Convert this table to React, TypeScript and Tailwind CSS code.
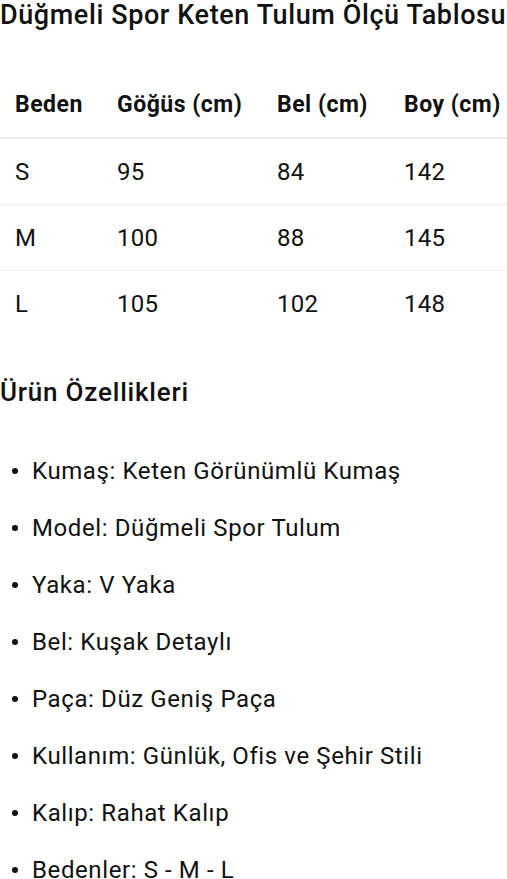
const headers = ["Beden", "Göğüs (cm)", "Bel (cm)", "Boy (cm)"];

const rows = [
  ["S", "95", "84", "142"],
  ["M", "100", "88", "145"],
  ["L", "105", "102", "148"],
];

const features = [
  "Kumaş: Keten Görünümlü Kumaş",
  "Model: Düğmeli Spor Tulum",
  "Yaka: V Yaka",
  "Bel: Kuşak Detaylı",
  "Paça: Düz Geniş Paça",
  "Kullanım: Günlük, Ofis ve Şehir Stili",
  "Kalıp: Rahat Kalıp",
  "Bedenler: S - M - L",
];

const App = () => {
  return (
    <div className="w-[507px] bg-white text-[#111] font-['Roboto',sans-serif]">
      <h1 className="h-[30px] leading-[30px] text-[27px] tracking-[0.6px] font-medium whitespace-nowrap">
        Düğmeli Spor Keten Tulum Ölçü Tablosu
      </h1>

      <div className="mt-[43px]">
        <div className="grid grid-cols-[102px_160px_127px_1fr] h-[66px] items-center border-b-2 border-[#ececec]">
          {headers.map((h) => (
            <div key={h} className="pl-[15px] text-[23px] tracking-[0.5px] font-bold whitespace-nowrap">
              {h}
            </div>
          ))}
        </div>
        {rows.map((row, i) => (
          <div
            key={row[0]}
            className={
              i < rows.length - 1
                ? "grid grid-cols-[102px_160px_127px_1fr] h-[66px] items-center border-b border-[#ececec]"
                : "grid grid-cols-[102px_160px_127px_1fr] h-[66px] items-center"
            }
          >
            {row.map((cell, j) => (
              <div key={j} className="pl-[15px] text-[24px] tracking-[0.3px] whitespace-nowrap">
                {cell}
              </div>
            ))}
          </div>
        ))}
      </div>

      <h2 className="mt-[40px] h-[30px] leading-[30px] text-[26px] tracking-[0.8px] font-medium">
        Ürün Özellikleri
      </h2>

      <ul className="mt-[50px] flex flex-col gap-[29px]">
        {features.map((f) => (
          <li key={f} className="flex items-center h-[28px] leading-[28px] text-[24px] tracking-[0.6px] whitespace-nowrap">
            <span className="w-[6px] h-[6px] rounded-full bg-[#111] ml-[12px] mr-[14px] shrink-0" />
            {f}
          </li>
        ))}
      </ul>
    </div>
  );
};

export default App;
